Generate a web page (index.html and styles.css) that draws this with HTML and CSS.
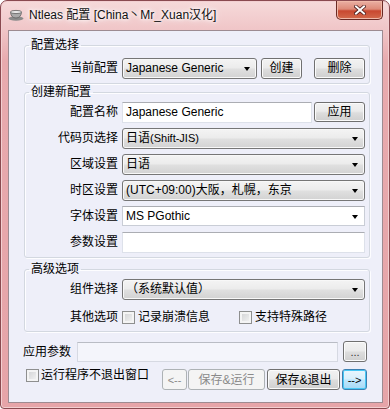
FILE: index.html
```html
<!DOCTYPE html>
<html>
<head>
	<meta charset="utf-8">
	<title>Ntleas 配置</title>
	<link rel="stylesheet" href="styles.css">
</head>
<body>
<div class="ventana">
	<div class="titulo">
		<svg class="icono" viewBox="0 0 16 12" width="16" height="12">
			<ellipse cx="8" cy="9.5" rx="7.5" ry="2.2" fill="#8a8a8a"/>
			<path d="M2.5 3 Q3 9 8 9 Q13 9 13.5 3 Z" fill="#a9a9a9" stroke="#5e5e5e" stroke-width="0.8"/>
			<ellipse cx="8" cy="3" rx="5.5" ry="1.6" fill="#e8e8e8" stroke="#5e5e5e" stroke-width="0.8"/>
		</svg>
		<span class="texto-titulo">Ntleas 配置 [China丶Mr_Xuan汉化]</span>
		<div class="cerrar">
			<svg viewBox="0 0 12 10" width="12" height="10">
				<path d="M2 1.5 L10 8.5 M10 1.5 L2 8.5" stroke="#4a1a1a" stroke-width="3.6" stroke-linecap="square"/>
				<path d="M2 1.5 L10 8.5 M10 1.5 L2 8.5" stroke="#ffffff" stroke-width="2" stroke-linecap="square"/>
			</svg>
		</div>
	</div>

	<div class="cliente">
		<!-- grupo 1 -->
		<fieldset class="grupo g1">
			<legend>配置选择</legend>
			<div class="fila">
				<label class="etiqueta">当前配置</label>
				<div class="combo" id="actual"><span>Japanese Generic</span><i class="flecha"></i></div>
				<button class="boton" id="crear">创建</button>
				<button class="boton" id="borrar">删除</button>
			</div>
		</fieldset>

		<!-- grupo 2 -->
		<fieldset class="grupo g2">
			<legend>创建新配置</legend>
			<div class="fila">
				<label class="etiqueta">配置名称</label>
				<div class="caja" id="nombre">Japanese Generic</div>
				<button class="boton" id="aplicar">应用</button>
			</div>
			<div class="fila">
				<label class="etiqueta">代码页选择</label>
				<div class="combo largo"><span>日语<small>(Shift-JIS)</small></span><i class="flecha"></i></div>
			</div>
			<div class="fila">
				<label class="etiqueta">区域设置</label>
				<div class="combo largo"><span>日语</span><i class="flecha"></i></div>
			</div>
			<div class="fila">
				<label class="etiqueta">时区设置</label>
				<div class="combo largo"><span>(UTC+09:00)大阪，札幌，东京</span><i class="flecha"></i></div>
			</div>
			<div class="fila">
				<label class="etiqueta">字体设置</label>
				<div class="combo editable largo"><span>MS PGothic</span><i class="flecha"></i></div>
			</div>
			<div class="fila">
				<label class="etiqueta">参数设置</label>
				<div class="caja largo"></div>
			</div>
		</fieldset>

		<!-- grupo 3 -->
		<fieldset class="grupo g3">
			<legend>高级选项</legend>
			<div class="fila">
				<label class="etiqueta">组件选择</label>
				<div class="combo largo"><span class="cjk">（系统默认值）</span><i class="flecha"></i></div>
			</div>
			<div class="fila checks">
				<label class="etiqueta">其他选项</label>
				<span class="check"></span>
				<span class="texto-check">记录崩溃信息</span>
				<span class="check segundo"></span>
				<span class="texto-check">支持特殊路径</span>
			</div>
		</fieldset>

		<div class="fila parametros">
			<label class="etiqueta-app">应用参数</label>
			<div class="caja" id="params"></div>
			<button class="boton" id="puntos">...</button>
		</div>

		<div class="fila inferior">
			<span class="check abajo"></span>
			<span class="texto-check abajo-texto">运行程序不退出窗口</span>
			<button class="boton desactivado" id="atras">&lt;--</button>
			<button class="boton desactivado" id="guardar-ejecutar">保存&amp;运行</button>
			<button class="boton" id="guardar-salir">保存&amp;退出</button>
			<button class="boton foco" id="adelante">--&gt;</button>
		</div>
	</div>
</div>
</body>
</html>
```

FILE: styles.css
```css
html, body {
	margin: 0;
	padding: 0;
	background: #fff;
}
.ventana {
	width: 390px;
	height: 409px;
	box-sizing: border-box;
	border: 1px solid #8a4a50;
	border-radius: 7px 7px 4px 4px;
	background: linear-gradient(#f6dada 0px, #f0c6c8 28px, #e8aaae 60px, #e6a4a8 100%);
	box-shadow: inset 0 0 0 1px #f3cfd1;
	font-family: "Liberation Sans", "Noto Sans CJK SC", sans-serif;
	font-size: 12px;
	color: #000;
}
.titulo {
	display: flex;
	align-items: flex-start;
	height: 29px;
	padding-left: 7px;
}
.icono {
	margin-top: 8px;
}
.texto-titulo {
	margin: 6px 0 0 5px;
	font-size: 12px;
	line-height: 16px;
	color: #111;
	text-shadow: 0 0 5px #fff, 0 0 3px #fff, 0 0 8px #fff;
}
.cerrar {
	margin-left: auto;
	margin-right: 6px;
	width: 45px;
	height: 18px;
	border: 1px solid #6a2a24;
	border-top: none;
	border-radius: 0 0 5px 5px;
	background: linear-gradient(#eab0a4 0%, #dd8a78 45%, #c84830 55%, #d36a4c 100%);
	box-shadow: inset 0 0 0 1px #f0b8a8;
	display: flex;
	align-items: center;
	justify-content: center;
}
.cliente {
	margin: 0 6px 0 7px;
	height: 373px;
	box-sizing: border-box;
	border: 1px solid #9d8b91;
	background: #eeeff9;
	padding-top: 7px;
}
.grupo {
	margin: 0 12px 0 15px;
	padding: 0 4px 4px 0;
	border: 1px solid #d3d8e0;
	border-radius: 3px;
	box-shadow: inset 1px 1px 0 #fdfdff, 1px 1px 0 #fdfdff;
	min-width: 0;
}
.grupo legend {
	margin-left: 4px;
	padding: 0 2px;
	font-size: 12px;
	line-height: 15px;
}
.g1 .fila {
	margin-top: 4px;
}
.g2 {
	margin-top: 1px;
}
.g2 .fila {
	margin-top: 4px;
}
.g2 .fila:first-of-type {
	margin-top: 1px;
}
.g3 {
	margin-top: 4px;
	padding-bottom: 3px;
}
.g3 .fila:first-of-type {
	margin-top: 1px;
}
.fila {
	display: flex;
	align-items: center;
	height: 22px;
}
.etiqueta {
	width: 93px;
	margin-right: 4px;
	text-align: right;
	line-height: 16px;
	flex-shrink: 0;
}
.combo {
	box-sizing: border-box;
	height: 21px;
	width: 135px;
	border: 1px solid #767676;
	border-radius: 3px;
	background: linear-gradient(#f4f4f4 0%, #ececec 45%, #dfdfdf 55%, #d2d2d2 100%);
	box-shadow: inset 0 0 0 1px #f8f8f8;
	display: flex;
	align-items: center;
	padding-left: 3px;
	line-height: 16px;
	white-space: nowrap;
}
.combo span {
	flex: 1;
	overflow: hidden;
}
.combo small {
	font-size: 11px;
}
.flecha {
	width: 0;
	height: 0;
	border-left: 3px solid transparent;
	border-right: 3px solid transparent;
	border-top: 4px solid #000;
	margin: 1px 6px 0 4px;
}
.editable {
	background: #fff;
	border: 1px solid #c9cdd6;
	border-top-color: #abadb3;
	border-radius: 0;
	box-shadow: none;
	height: 20px;
}
.caja {
	box-sizing: border-box;
	height: 21px;
	width: 190px;
	background: #fff;
	border: 1px solid #dde1ea;
	border-top-color: #abadb3;
	padding-left: 3px;
	line-height: 18px;
	white-space: nowrap;
}
.combo.largo,
.caja.largo {
	width: 243px;
}
.boton {
	box-sizing: border-box;
	height: 21px;
	padding: 0;
	font-family: "Liberation Sans", "Noto Sans CJK SC", sans-serif;
	font-size: 12px;
	line-height: 16px;
	color: #000;
	border: 1px solid #707070;
	border-radius: 3px;
	background: linear-gradient(#f2f2f2 0%, #ebebeb 45%, #dddddd 55%, #cfcfcf 100%);
	box-shadow: inset 0 0 0 1px #fbfbfb;
}
#crear {
	width: 41px;
	margin-left: 4px;
}
#borrar {
	width: 51px;
	margin-left: 12px;
}
#aplicar {
	width: 51px;
	margin-left: 2px;
	height: 20px;
}
.checks {
	margin-top: 6px;
}
.check {
	box-sizing: border-box;
	width: 13px;
	height: 13px;
	border: 1px solid #8e8f8f;
	background: linear-gradient(135deg, #cfd0d2, #f6f6f6);
	box-shadow: inset 0 0 0 2px #f4f4f4;
	flex-shrink: 0;
}
.texto-check {
	margin-left: 3px;
	line-height: 16px;
	white-space: nowrap;
}
.segundo {
	margin-left: 29px;
}
.parametros {
	margin-top: 9px;
	height: 21px;
}
.etiqueta-app {
	margin-left: 14px;
	width: 48px;
	line-height: 16px;
}
#params {
	width: 261px;
	height: 20px;
	margin-left: 6px;
	background: #f4f5fb;
	border-color: #d6d9e2;
	border-top-color: #b9bcc4;
}
#puntos {
	width: 24px;
	margin-left: 5px;
	color: #333;
	font-size: 11px;
}
.inferior {
	margin-top: 7px;
	height: 21px;
	align-items: flex-start;
}
.abajo {
	margin-left: 17px;
	margin-top: 0;
}
.abajo-texto {
	margin-left: 2px;
	margin-top: -2px;
	font-size: 12px;
}
.desactivado {
	border-color: #adb2b5;
	background: #f4f4f4;
	box-shadow: none;
	color: #8a8a8a;
}
#atras {
	width: 25px;
	margin-left: 13px;
	font-size: 11px;
}
#guardar-ejecutar {
	width: 77px;
	margin-left: 1px;
}
#guardar-salir {
	width: 73px;
	margin-left: 2px;
}
.foco {
	border-color: #3c7fb1;
	background: linear-gradient(#eaf6fd 0%, #d9f0fc 45%, #bee6fd 55%, #a7d9f5 100%);
	box-shadow: inset 0 0 0 1px #48c8f5;
}
#adelante {
	width: 25px;
	margin-left: 2px;
	font-size: 11px;
}
```
